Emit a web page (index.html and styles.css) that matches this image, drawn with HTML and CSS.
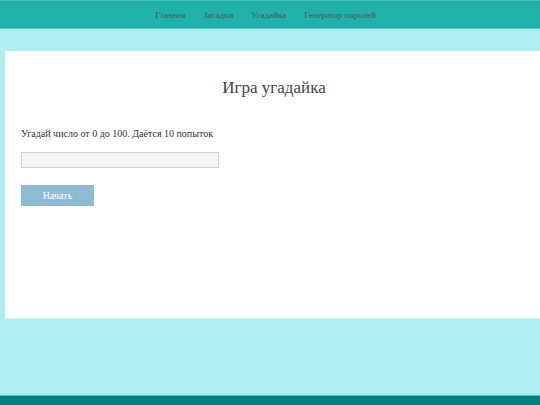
FILE: index.html
```html
<!DOCTYPE html>
<html lang="ru">
<head>
<meta charset="utf-8">
<title>Игра угадайка</title>
<link rel="stylesheet" href="styles.css">
</head>
<body>
<header class="header">
  <nav class="nav">
    <a class="nav-link" href="#">Главная</a>
    <a class="nav-link" href="#">Загадки</a>
    <a class="nav-link" href="#">Угадайка</a>
    <a class="nav-link" href="#">Генератор паролей</a>
  </nav>
</header>
<main class="card">
  <h1 class="title">Игра угадайка</h1>
  <p class="text">Угадай число от 0 до 100. Даётся 10 попыток</p>
  <input class="field" type="text">
  <button class="btn" type="button">Начать</button>
</main>
<footer class="footer"></footer>
</body>
</html>
```
FILE: styles.css
```css
html, body {
  margin: 0;
  padding: 0;
}
body {
  background: #afeeee;
  font-family: "Liberation Serif", "Times New Roman", serif;
  height: 405px;
  position: relative;
  overflow: hidden;
}
.header {
  background: #20b2aa;
  height: 29px;
  border-top: 1px solid #3cbcb5;
  box-sizing: border-box;
  border-bottom: 1px solid #5ccdc6;
}
.nav {
  display: flex;
  justify-content: center;
  gap: 18px;
  height: 100%;
  align-items: center;
  padding-right: 9px;
}
.nav-link {
  color: #4a5a5a;
  text-decoration: none;
  font-size: 9px;
}
.card {
  background: #fff;
  margin: 22px -3px 0 5px;
  height: 268px;
  box-sizing: border-box;
  padding: 26px 16px 0;
  border-bottom: 1px solid #c8f0f0;
}
.title {
  margin: 0;
  text-align: center;
  font-weight: normal;
  font-size: 17px;
  color: #444;
  line-height: 22px;
}
.text {
  margin: 28px 0 0;
  font-size: 10px;
  color: #333;
  line-height: 14px;
}
.field {
  display: block;
  margin-top: 11px;
  width: 198px;
  height: 16px;
  box-sizing: border-box;
  background: #f5f5f5;
  border: 1px solid #d0d0d0;
  padding: 0;
}
.btn {
  display: block;
  margin-top: 17px;
  width: 73px;
  height: 21px;
  background: #8fbcd4;
  color: #fff;
  border: none;
  font-family: "Liberation Serif", "Times New Roman", serif;
  font-size: 10px;
  padding: 0;
}
.footer {
  position: absolute;
  left: 0;
  right: 0;
  bottom: 0;
  height: 9px;
  background: #008080;
  border-top: 1px solid #4cc4c0;
}
```
